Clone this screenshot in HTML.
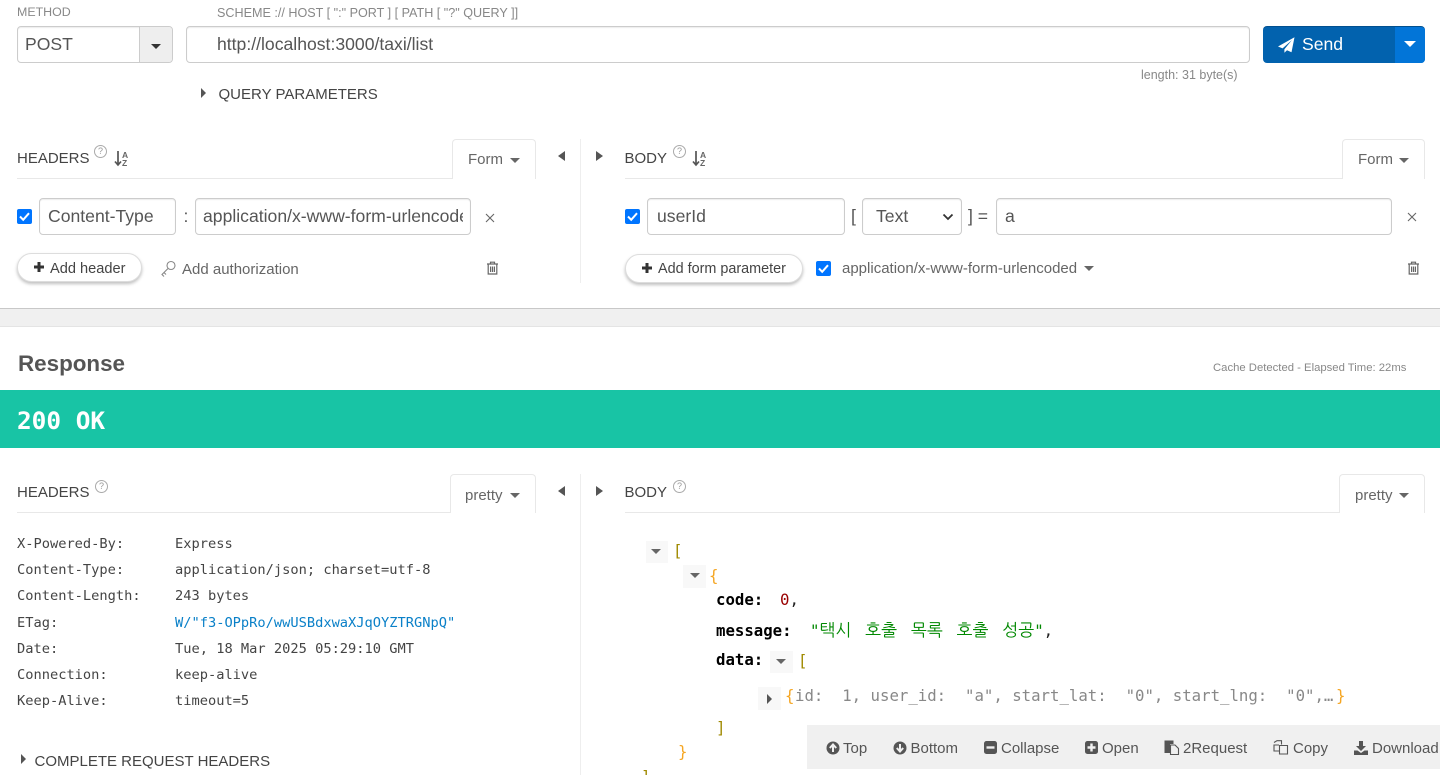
<!DOCTYPE html>
<html style="overflow:hidden;height:775px"><head><meta charset="utf-8"><style>
html,body{margin:0;padding:0;background:#fff}
body{width:1440px;height:775px;position:relative;overflow:hidden;font-family:"Liberation Sans",sans-serif;color:#555}
.a{position:absolute;white-space:pre;line-height:1}
.box{position:absolute;box-sizing:border-box;border:1px solid #ccc;border-radius:4px;background:#fff;box-shadow:inset 0 1px 1px rgba(0,0,0,.075)}
.t{font-size:17.6px;color:#555}
.lbl{font-size:15px;color:#444}
.tab{position:absolute;box-sizing:border-box;border:1px solid #e8e8e8;border-bottom:0;border-radius:4px 4px 0 0;background:#fff;font-size:15px;color:#666}
.tab span{position:absolute;top:11px;white-space:pre}
.tri{position:absolute;width:0;height:0}
.dn{border-left:5px solid transparent;border-right:5px solid transparent;border-top:5px solid #666}
.rt{border-top:5px solid transparent;border-bottom:5px solid transparent;border-left:5px solid #555}
.lf{border-top:5px solid transparent;border-bottom:5px solid transparent;border-right:5px solid #555}
.hr{position:absolute;height:1px;background:#e8e8e8}
.cb{position:absolute;width:15px;height:15px;background:#0075ff;border-radius:2px}
.cb svg{display:block}
.pill{position:absolute;box-sizing:border-box;height:29px;background:#fff;border:1px solid #ddd;border-radius:15px;box-shadow:0 2px 3px rgba(0,0,0,.25);font-size:14px;color:#444}
.m{font-family:"DejaVu Sans Mono","Liberation Mono",monospace;font-size:13.7px;color:#444}
.j{font-family:"DejaVu Sans Mono","Liberation Mono","NanumGothic",monospace;font-size:15.7px;color:#222}
.k{font-weight:bold;color:#000}
.fold{position:absolute;width:22px;height:22px;background:#f8f8f8}
.tb{font-size:15px;color:#555;top:741px}
</style></head><body>

<div class="a" style="left:17px;top:6px;font-size:12.4px;color:#888">METHOD</div>
<div class="a" style="left:217px;top:7px;font-size:12.6px;color:#888">SCHEME :// HOST [ ":" PORT ] [ PATH [ "?" QUERY ]]</div>

<div class="box" style="left:17px;top:26px;width:156px;height:37px"></div>
<div class="a t" style="left:25px;top:36px">POST</div>
<div style="position:absolute;left:139px;top:27px;width:33px;height:35px;background:#eee;border-left:1px solid #ccc;box-sizing:border-box;border-radius:0 3px 3px 0"></div>
<div class="tri" style="left:151px;top:44px;border-left:5px solid transparent;border-right:5px solid transparent;border-top:5px solid #333"></div>

<div class="box" style="left:186px;top:26px;width:1064px;height:37px"></div>
<div class="a t" style="left:217px;top:36px">http://localhost:3000/taxi/list</div>

<div style="position:absolute;left:1263px;top:26px;width:162px;height:37px;background:#0262ae;border-radius:4px;overflow:hidden;border-top:1px solid #01508f;box-sizing:border-box">
<div style="position:absolute;left:132px;top:-1px;width:30px;height:37px;background:#0275d8"></div></div>
<div class="tri" style="left:1404px;top:41px;border-left:6px solid transparent;border-right:6px solid transparent;border-top:6px solid #fff"></div>
<svg style="position:absolute;left:1278px;top:37px" width="17" height="16" viewBox="0 0 17 16"><path d="M16.5 0.3 L0 9.5 L4.6 11.4 L14 3 L6.4 12.2 L6.4 15.8 L9 13.3 L13.5 15.2Z" fill="#fff"/></svg>
<div class="a" style="left:1302px;top:36px;font-size:17.6px;color:#fff">Send</div>

<div class="a" style="left:1141px;top:69px;font-size:12.5px;color:#888">length: 31 byte(s)</div>

<div class="tri rt" style="left:201px;top:88px"></div>
<div class="a lbl" style="left:218.5px;top:87px;color:#444">QUERY PARAMETERS</div>

<!-- request panel -->
<div class="a lbl" style="left:17px;top:151px">HEADERS</div>
<div class="a" style="left:94px;top:145px;width:13px;height:13px;border:1px solid #aaa;border-radius:50%;box-sizing:border-box;font-size:9px;line-height:11px;text-align:center;color:#999">?</div>
<svg style="position:absolute;left:113px;top:150px" width="17" height="17" viewBox="0 0 17 17"><path d="M5 1V14M2 11.5L5 15L8 11.5" stroke="#555" stroke-width="1.7" fill="none"/></svg>
<div class="a" style="left:122px;top:151px;font-size:8.5px;font-weight:bold;color:#666">A</div>
<div class="a" style="left:122px;top:159px;font-size:8.5px;font-weight:bold;color:#666">Z</div>
<div class="hr" style="left:17px;top:178px;width:519px"></div>
<div class="tab" style="left:452px;top:139px;width:84px;height:40px"><span style="left:15px">Form</span><i class="tri dn" style="left:57px;top:18px"></i></div>

<div class="tri lf" style="left:558px;top:151px;border-right-width:7px"></div>
<div class="tri rt" style="left:596px;top:151px;border-left-width:7px"></div>
<div style="position:absolute;left:580px;top:139px;width:1px;height:144px;background:#eee"></div>

<div class="a lbl" style="left:624.5px;top:151px">BODY</div>
<div class="a" style="left:673px;top:145px;width:13px;height:13px;border:1px solid #aaa;border-radius:50%;box-sizing:border-box;font-size:9px;line-height:11px;text-align:center;color:#999">?</div>
<svg style="position:absolute;left:691px;top:150px" width="17" height="17" viewBox="0 0 17 17"><path d="M5 1V14M2 11.5L5 15L8 11.5" stroke="#555" stroke-width="1.7" fill="none"/></svg>
<div class="a" style="left:700px;top:151px;font-size:8.5px;font-weight:bold;color:#666">A</div>
<div class="a" style="left:700px;top:159px;font-size:8.5px;font-weight:bold;color:#666">Z</div>
<div class="hr" style="left:625px;top:178px;width:800px"></div>
<div class="tab" style="left:1342px;top:139px;width:83px;height:40px"><span style="left:15px">Form</span><i class="tri dn" style="left:56px;top:18px"></i></div>

<div class="cb" style="left:17px;top:209px"><svg width="15" height="15" viewBox="0 0 15 15"><path d="M3 7.5L6.2 10.8L12 4.2" stroke="#fff" stroke-width="2" fill="none"/></svg></div>
<div class="box" style="left:39px;top:198px;width:137px;height:37px"></div>
<div class="a t" style="left:48px;top:208px">Content-Type</div>
<div class="a" style="left:183.5px;top:208px;font-size:17.6px;color:#555">:</div>
<div class="box" style="left:195px;top:198px;width:276px;height:37px"></div>
<div style="position:absolute;left:203px;top:205px;width:260px;height:24px;overflow:hidden"><div class="a t" style="left:0;top:2px;line-height:18px">application/x-www-form-urlencoded</div></div>
<svg style="position:absolute;left:485px;top:213px" width="10" height="10" viewBox="0 0 10 10"><path d="M1 1L9 9M9 1L1 9" stroke="#666" stroke-width="1.1"/></svg>

<div class="pill" style="left:17px;top:253px;width:125px"></div>
<svg style="position:absolute;left:33px;top:261px" width="12" height="12" viewBox="0 0 12 12"><path d="M6 1V11M1 6H11" stroke="#333" stroke-width="3"/></svg>
<div class="a" style="left:50px;top:262px;font-size:14.6px;color:#444">Add header</div>
<svg style="position:absolute;left:158px;top:259px" width="20" height="20" viewBox="0 0 20 20"><circle cx="13" cy="6.5" r="4" fill="none" stroke="#888" stroke-width="1.1"/><path d="M10 9.5L4 15.5L6 17.5M6 13.5L8 15.5" fill="none" stroke="#888" stroke-width="1.1"/></svg>
<div class="a" style="left:182px;top:262px;font-size:15px;color:#666">Add authorization</div>
<svg style="position:absolute;left:486px;top:261px" width="13" height="14" viewBox="0 0 13 14"><path d="M1 3H12M4.5 3V1.2H8.5V3M2.2 3.5V13H10.8V3.5M4.6 5.5V11M6.5 5.5V11M8.4 5.5V11" fill="none" stroke="#666" stroke-width="1.2"/></svg>

<div class="cb" style="left:625px;top:209px"><svg width="15" height="15" viewBox="0 0 15 15"><path d="M3 7.5L6.2 10.8L12 4.2" stroke="#fff" stroke-width="2" fill="none"/></svg></div>
<div class="box" style="left:647px;top:198px;width:198px;height:37px"></div>
<div class="a t" style="left:657px;top:208px">userId</div>
<div class="a" style="left:851px;top:208px;font-size:17.6px;color:#555">[</div>
<div class="box" style="left:862px;top:198px;width:100px;height:37px"></div>
<div class="a t" style="left:876px;top:208px">Text</div>
<svg style="position:absolute;left:942px;top:213px" width="12" height="8" viewBox="0 0 12 8"><path d="M1.5 1.5L6 6L10.5 1.5" stroke="#333" stroke-width="1.8" fill="none"/></svg>
<div class="a" style="left:968px;top:208px;font-size:17.6px;color:#555">] =</div>
<div class="box" style="left:996px;top:198px;width:396px;height:37px"></div>
<div class="a t" style="left:1005px;top:208px">a</div>
<svg style="position:absolute;left:1407px;top:212px" width="10" height="10" viewBox="0 0 10 10"><path d="M1 1L9 9M9 1L1 9" stroke="#666" stroke-width="1.1"/></svg>

<div class="pill" style="left:625px;top:254px;width:178px"></div>
<svg style="position:absolute;left:641px;top:262px" width="12" height="12" viewBox="0 0 12 12"><path d="M6 1V11M1 6H11" stroke="#333" stroke-width="3"/></svg>
<div class="a" style="left:658px;top:262px;font-size:14.4px;color:#444">Add form parameter</div>
<div class="cb" style="left:816px;top:261px"><svg width="15" height="15" viewBox="0 0 15 15"><path d="M3 7.5L6.2 10.8L12 4.2" stroke="#fff" stroke-width="2" fill="none"/></svg></div>
<div class="a" style="left:842px;top:261px;font-size:15px;color:#666">application/x-www-form-urlencoded</div>
<div class="tri dn" style="left:1084px;top:266px"></div>
<svg style="position:absolute;left:1407px;top:261px" width="13" height="14" viewBox="0 0 13 14"><path d="M1 3H12M4.5 3V1.2H8.5V3M2.2 3.5V13H10.8V3.5M4.6 5.5V11M6.5 5.5V11M8.4 5.5V11" fill="none" stroke="#666" stroke-width="1.2"/></svg>

<!-- divider -->
<div style="position:absolute;left:0;top:308px;width:1440px;height:19px;background:#f0f0f0;border-top:1px solid #c8c8c8;border-bottom:1px solid #e4e4e4;box-sizing:border-box"></div>

<!-- response -->
<div class="a" style="left:18px;top:353px;font-size:22.4px;font-weight:bold;color:#555">Response</div>
<div class="a" style="left:1213px;top:363px;font-size:11.3px;color:#888">Cache Detected - Elapsed Time: 22ms</div>
<div style="position:absolute;left:0;top:390px;width:1440px;height:58px;background:#18c4a5"></div>
<div class="a" style="left:17px;top:409px;font-family:'DejaVu Sans Mono',monospace;font-weight:bold;font-size:24.4px;color:#fff">200 OK</div>

<div class="a lbl" style="left:17px;top:485px">HEADERS</div>
<div class="a" style="left:95px;top:480px;width:13px;height:13px;border:1px solid #aaa;border-radius:50%;box-sizing:border-box;font-size:9px;line-height:11px;text-align:center;color:#999">?</div>
<div class="hr" style="left:17px;top:512px;width:519px"></div>
<div class="tab" style="left:450px;top:474px;width:86px;height:39px"><span style="left:14px;top:12px">pretty</span><i class="tri dn" style="left:59px;top:18px"></i></div>

<div class="tri lf" style="left:558px;top:486px;border-right-width:7px"></div>
<div class="tri rt" style="left:596px;top:486px;border-left-width:7px"></div>
<div style="position:absolute;left:580px;top:474px;width:1px;height:301px;background:#eee"></div>

<div class="a lbl" style="left:624.5px;top:485px">BODY</div>
<div class="a" style="left:673px;top:480px;width:13px;height:13px;border:1px solid #aaa;border-radius:50%;box-sizing:border-box;font-size:9px;line-height:11px;text-align:center;color:#999">?</div>
<div class="hr" style="left:625px;top:512px;width:800px"></div>
<div class="tab" style="left:1339px;top:474px;width:86px;height:39px"><span style="left:15px;top:12px">pretty</span><i class="tri dn" style="left:59px;top:18px"></i></div>

<div class="a m" style="left:17px;top:538px">X-Powered-By:</div><div class="a m" style="left:175px;top:538px">Express</div>
<div class="a m" style="left:17px;top:564px">Content-Type:</div><div class="a m" style="left:175px;top:564px">application/json; charset=utf-8</div>
<div class="a m" style="left:17px;top:590px">Content-Length:</div><div class="a m" style="left:175px;top:590px">243 bytes</div>
<div class="a m" style="left:17px;top:617px">ETag:</div><div class="a m" style="left:175px;top:617px;color:#0a80c8">W/"f3-OPpRo/wwUSBdxwaXJqOYZTRGNpQ"</div>
<div class="a m" style="left:17px;top:643px">Date:</div><div class="a m" style="left:175px;top:643px">Tue, 18 Mar 2025 05:29:10 GMT</div>
<div class="a m" style="left:17px;top:669px">Connection:</div><div class="a m" style="left:175px;top:669px">keep-alive</div>
<div class="a m" style="left:17px;top:695px">Keep-Alive:</div><div class="a m" style="left:175px;top:695px">timeout=5</div>

<div class="tri rt" style="left:21px;top:754px"></div>
<div class="a lbl" style="left:34.5px;top:754px">COMPLETE REQUEST HEADERS</div>

<!-- json -->
<div class="fold" style="left:646px;top:541px"></div><div class="tri dn" style="left:651px;top:549px"></div>
<div class="a j" style="left:673px;top:543px;color:#a08a00">[</div>
<div class="fold" style="left:683px;top:565px;width:23px;height:23px"></div><div class="tri dn" style="left:690px;top:573px"></div>
<div class="a j" style="left:709px;top:568px;color:#f5a623">{</div>
<div class="a j k" style="left:716px;top:592px">code:</div>
<div class="a j" style="left:780px;top:592px"><span style="color:#900">0</span>,</div>
<div class="a j k" style="left:716px;top:623px">message:</div>
<div class="a j" style="left:810px;top:623px;color:#080;font-family:'DejaVu Sans Mono','NanumGothic',monospace">"<span style="font-size:17px;word-spacing:3.5px">택시 호출 목록 호출 성공</span>"<span style="color:#222">,</span></div>
<div class="a j k" style="left:716px;top:652px">data:</div>
<div class="fold" style="left:770px;top:651px;width:23px;height:22px"></div><div class="tri dn" style="left:776px;top:659px"></div>
<div class="a j" style="left:798px;top:653px;color:#a08a00">[</div>
<div class="fold" style="left:758px;top:687px;width:23px;height:23px"></div><div class="tri rt" style="left:767px;top:694px"></div>
<div class="a j" style="left:785px;top:688px;color:#f5a623">{</div>
<div class="a j" style="left:795px;top:688px;color:#888">id:  1, user_id:  "a", start_lat:  "0", start_lng:  "0",…</div>
<div class="a j" style="left:1336px;top:688px;color:#f5a623">}</div>
<div class="a j" style="left:716px;top:720px;color:#a08a00">]</div>
<div class="a j" style="left:678px;top:744px;color:#f5a623">}</div>
<div class="a j" style="left:641px;top:769px;color:#a08a00">]</div>

<!-- toolbar -->
<div style="position:absolute;left:807px;top:725px;width:633px;height:44px;background:#f0f0f0"></div>
<svg style="position:absolute;left:826px;top:741px" width="14" height="14" viewBox="0 0 14 14"><circle cx="7" cy="7" r="6.5" fill="#555"/><path d="M7 11V4M3.8 7L7 3.5L10.2 7" stroke="#f0f0f0" stroke-width="2" fill="none"/></svg>
<div class="a tb" style="left:843px">Top</div>
<svg style="position:absolute;left:893px;top:741px" width="14" height="14" viewBox="0 0 14 14"><circle cx="7" cy="7" r="6.5" fill="#555"/><path d="M7 3V10M3.8 7L7 10.5L10.2 7" stroke="#f0f0f0" stroke-width="2" fill="none"/></svg>
<div class="a tb" style="left:910.5px">Bottom</div>
<svg style="position:absolute;left:984px;top:741px" width="13" height="13" viewBox="0 0 13 13"><rect width="13" height="13" rx="2.5" fill="#555"/><path d="M2.5 6.5H10.5" stroke="#f0f0f0" stroke-width="2.4"/></svg>
<div class="a tb" style="left:1001px">Collapse</div>
<svg style="position:absolute;left:1085px;top:741px" width="13" height="13" viewBox="0 0 13 13"><rect width="13" height="13" rx="2.5" fill="#555"/><path d="M2.5 6.5H10.5M6.5 2.5V10.5" stroke="#f0f0f0" stroke-width="2.4"/></svg>
<div class="a tb" style="left:1102px">Open</div>
<svg style="position:absolute;left:1164px;top:740px" width="16" height="15" viewBox="0 0 16 15"><path d="M0.5 0.5H9.5V4H6V13H0.5Z" fill="#555"/><path d="M6.5 5H11L14.5 8.5V14.5H6.5Z" fill="#f0f0f0" stroke="#555" stroke-width="1.1"/></svg>
<div class="a tb" style="left:1183px">2Request</div>
<svg style="position:absolute;left:1273px;top:740px" width="16" height="15" viewBox="0 0 16 15"><path d="M1 2.5L4 0.7H8.5V4.5M6 5H1V11H6" fill="none" stroke="#555" stroke-width="1.1"/><path d="M6.5 5.5H11L14.5 5.5V14H6.5Z" fill="none" stroke="#555" stroke-width="1.1"/></svg>
<div class="a tb" style="left:1293px">Copy</div>
<svg style="position:absolute;left:1353px;top:741px" width="16" height="14" viewBox="0 0 16 14"><path d="M6 0H10V5H13L8 10L3 5H6Z" fill="#555"/><path d="M1 9.5H4.5L8 12L11.5 9.5H15V14H1Z" fill="#555"/></svg>
<div class="a tb" style="left:1372px">Download</div>

</body></html>
